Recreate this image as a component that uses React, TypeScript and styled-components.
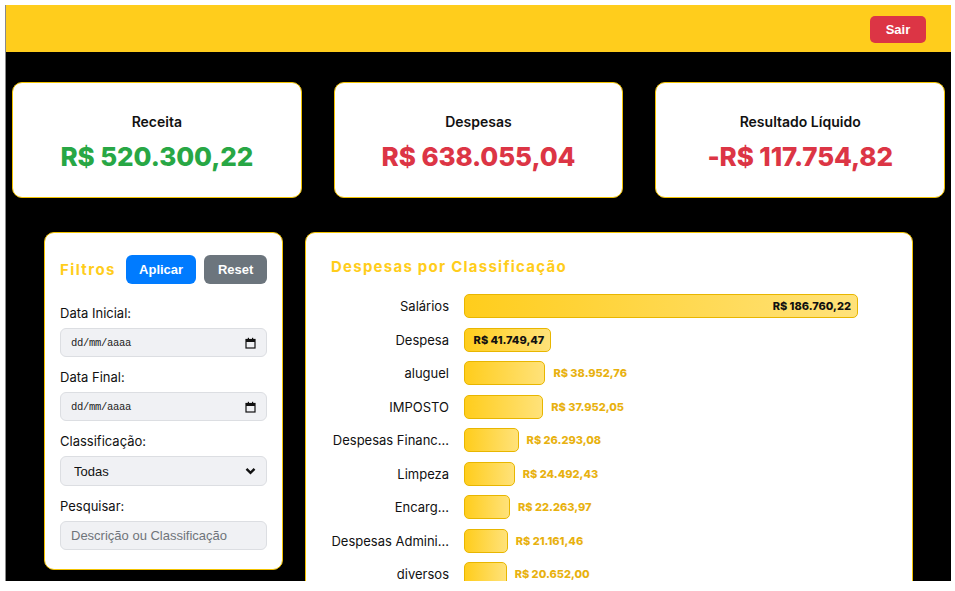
import React from "react";
import styled, { createGlobalStyle } from "styled-components";

const GlobalStyle = createGlobalStyle`
  html, body { margin: 0; padding: 0; background: #ffffff; }
  body { font-family: "Inter", "Liberation Sans", sans-serif; }
  * { box-sizing: border-box; }
`;

const YELLOW = "#ffcd1c";
const BORDER_YELLOW = "#f2c200";

const Frame = styled.div`
  margin: 5px 4px 0 5px;
  height: 576px;
  overflow: hidden;
  border-left: 1px solid #8a8a8a;
  background: #000;
  display: flex;
  flex-direction: column;
`;

const Header = styled.header`
  height: 47px;
  flex-shrink: 0;
  background: ${YELLOW};
  display: flex;
  align-items: center;
  justify-content: flex-end;
  padding: 2px 25px 0 0;
`;

const ExitButton = styled.button`
  height: 27px;
  width: 56px;
  border: none;
  border-radius: 5px;
  background: #dc3545;
  color: #fff;
  font-family: "Liberation Sans", Arial, sans-serif;
  font-weight: 700;
  font-size: 13px;
  cursor: pointer;
`;

const Cards = styled.section`
  display: grid;
  grid-template-columns: repeat(3, 1fr);
  gap: 32px;
  padding: 30px 6px 0 6px;
`;

const Card = styled.div`
  background: #fff;
  border: 1px solid ${BORDER_YELLOW};
  border-radius: 10px;
  padding: 28px 16px 22px;
  display: flex;
  flex-direction: column;
  align-items: center;
`;

const CardTitle = styled.div`
  font-size: 14px;
  font-weight: 600;
  color: #111;
  line-height: 22px;
  margin-bottom: 6px;
`;

const CardValue = styled.div<{ $color: string }>`
  font-size: 26px;
  font-weight: 800;
  line-height: 36px;
  color: ${(p) => p.$color};
  letter-spacing: -0.1px;
`;

const Lower = styled.section`
  display: grid;
  grid-template-columns: 239px 1fr;
  gap: 22px;
  align-items: start;
  padding: 34px 38px 0 38px;
`;

const Panel = styled.div`
  background: #fff;
  border: 1px solid ${BORDER_YELLOW};
  border-radius: 10px;
`;

const FilterPanel = styled(Panel)`
  padding: 22px 15px 19px;
  display: flex;
  flex-direction: column;
`;

const FilterHead = styled.div`
  display: flex;
  align-items: center;
  gap: 8px;
  margin-bottom: 19px;
`;

const PanelTitle = styled.h2`
  margin: 0;
  font-size: 15px;
  font-weight: 700;
  color: ${YELLOW};
  letter-spacing: 1.4px;
`;

const FilterTitle = styled(PanelTitle)`
  margin-right: 2px;
`;

const ActionButton = styled.button<{ $bg: string; $w: number }>`
  height: 29px;
  width: ${(p) => p.$w}px;
  border: none;
  border-radius: 6px;
  background: ${(p) => p.$bg};
  color: #fff;
  font-family: "Liberation Sans", Arial, sans-serif;
  font-weight: 700;
  font-size: 13px;
  cursor: pointer;
`;

const FieldGroup = styled.div`
  display: flex;
  flex-direction: column;
  gap: 5px;
  & + & { margin-top: 10px; }
`;

const Label = styled.label`
  font-size: 13px;
  line-height: 20px;
  color: #111;
`;

const FieldBox = styled.div<{ $h?: number }>`
  height: ${(p) => p.$h ?? 29}px;
  background: #f0f1f4;
  border: 1px solid #dcdee2;
  border-radius: 6px;
  display: flex;
  align-items: center;
  padding: 0 10px;
  gap: 6px;
`;

const DateText = styled.span`
  flex: 1;
  min-width: 0;
  font-family: "Liberation Mono", monospace;
  font-size: 10.5px;
  color: #222;
  letter-spacing: -0.3px;
`;

const Select = styled.select`
  flex: 1;
  min-width: 0;
  appearance: none;
  -webkit-appearance: none;
  border: none;
  background: transparent;
  outline: none;
  font-family: "Liberation Sans", Arial, sans-serif;
  font-size: 13px;
  color: #111;
  padding: 0 0 0 3px;
`;

const SearchInput = styled.input`
  flex: 1;
  min-width: 0;
  border: none;
  background: transparent;
  outline: none;
  font-family: "Liberation Sans", Arial, sans-serif;
  font-size: 13px;
  color: #111;
  padding: 0;
  &::placeholder { color: #6f747a; }
`;

const ChartPanel = styled(Panel)`
  padding: 22px 25px 30px;
`;

const ChartTitle = styled(PanelTitle)`
  font-size: 15px;
  margin-bottom: 15px;
  line-height: 24px;
  letter-spacing: 1.25px;
`;

const Rows = styled.div`
  display: flex;
  flex-direction: column;
  gap: 9.5px;
`;

const Row = styled.div`
  display: grid;
  grid-template-columns: 118px 1fr;
  gap: 15px;
  align-items: center;
  height: 24px;
`;

const RowLabel = styled.div`
  font-size: 13px;
  color: #111;
  text-align: right;
  white-space: nowrap;
`;

const BarTrack = styled.div`
  display: flex;
  align-items: center;
  height: 24px;
`;

const Bar = styled.div`
  height: 24px;
  border: 1px solid #e8b600;
  border-radius: 5px;
  background: linear-gradient(90deg, #ffcd1c 0%, #ffe27a 100%);
  display: flex;
  align-items: center;
  justify-content: flex-end;
  padding-right: 6px;
  flex-shrink: 0;
`;

const ValueText = styled.span<{ $inside: boolean }>`
  font-size: 11px;
  font-weight: 800;
  white-space: nowrap;
  color: ${(p) => (p.$inside ? "#111" : "#e8b10f")};
  margin-left: ${(p) => (p.$inside ? 0 : 8)}px;
`;

const CalendarIcon = () => (
  <svg width="11" height="12" viewBox="0 0 11 12" aria-hidden="true">
    <rect x="1" y="2.5" width="9" height="8.5" fill="none" stroke="#111" strokeWidth="1.2" />
    <rect x="1" y="2.5" width="9" height="2.5" fill="#111" />
    <rect x="2.8" y="0.8" width="1.2" height="2" fill="#111" />
    <rect x="7" y="0.8" width="1.2" height="2" fill="#111" />
  </svg>
);

const Chevron = () => (
  <svg width="11" height="8" viewBox="0 0 11 8" aria-hidden="true">
    <polyline points="1.5,1.8 5.5,5.8 9.5,1.8" fill="none" stroke="#111" strokeWidth="2.4" />
  </svg>
);

const data: { label: string; value: number }[] = [
  { label: "Salários", value: 186760.22 },
  { label: "Despesa", value: 41749.47 },
  { label: "aluguel", value: 38952.76 },
  { label: "IMPOSTO", value: 37952.05 },
  { label: "Despesas Financ...", value: 26293.08 },
  { label: "Limpeza", value: 24492.43 },
  { label: "Encarg...", value: 22263.97 },
  { label: "Despesas Admini...", value: 21161.46 },
  { label: "diversos", value: 20652.0 },
];

const fmt = (v: number) =>
  "R$ " +
  v
    .toFixed(2)
    .replace(".", ",")
    .replace(/\B(?=(\d{3})+(?!\d))/g, ".");

const max = Math.max(...data.map((d) => d.value));

export default function App() {
  return (
    <>
      <GlobalStyle />
      <Frame>
        <Header>
          <ExitButton>Sair</ExitButton>
        </Header>
        <Cards>
          <Card>
            <CardTitle>Receita</CardTitle>
            <CardValue $color="#28a745">R$ 520.300,22</CardValue>
          </Card>
          <Card>
            <CardTitle>Despesas</CardTitle>
            <CardValue $color="#dc3545">R$ 638.055,04</CardValue>
          </Card>
          <Card>
            <CardTitle>Resultado Líquido</CardTitle>
            <CardValue $color="#dc3545">-R$ 117.754,82</CardValue>
          </Card>
        </Cards>
        <Lower>
          <FilterPanel>
            <FilterHead>
              <FilterTitle>Filtros</FilterTitle>
              <ActionButton $bg="#007bff" $w={71}>Aplicar</ActionButton>
              <ActionButton $bg="#6c757d" $w={63}>Reset</ActionButton>
            </FilterHead>
            <FieldGroup>
              <Label>Data Inicial:</Label>
              <FieldBox>
                <DateText>dd/mm/aaaa</DateText>
                <CalendarIcon />
              </FieldBox>
            </FieldGroup>
            <FieldGroup>
              <Label>Data Final:</Label>
              <FieldBox>
                <DateText>dd/mm/aaaa</DateText>
                <CalendarIcon />
              </FieldBox>
            </FieldGroup>
            <FieldGroup>
              <Label>Classificação:</Label>
              <FieldBox $h={30}>
                <Select defaultValue="Todas">
                  <option>Todas</option>
                </Select>
                <Chevron />
              </FieldBox>
            </FieldGroup>
            <FieldGroup>
              <Label>Pesquisar:</Label>
              <FieldBox>
                <SearchInput placeholder="Descrição ou Classificação" />
              </FieldBox>
            </FieldGroup>
          </FilterPanel>
          <ChartPanel>
            <ChartTitle>Despesas por Classificação</ChartTitle>
            <Rows>
              {data.map((d) => {
                const ratio = d.value / max;
                const inside = ratio > 0.22;
                return (
                  <Row key={d.label}>
                    <RowLabel>{d.label}</RowLabel>
                    <BarTrack>
                      <Bar style={{ width: `${ratio * 395 - 1}px` }}>
                        {inside && <ValueText $inside>{fmt(d.value)}</ValueText>}
                      </Bar>
                      {!inside && <ValueText $inside={false}>{fmt(d.value)}</ValueText>}
                    </BarTrack>
                  </Row>
                );
              })}
            </Rows>
          </ChartPanel>
        </Lower>
      </Frame>
    </>
  );
}
